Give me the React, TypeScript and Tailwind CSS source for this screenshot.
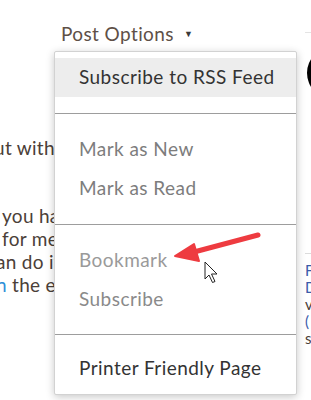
const paragraph = [
  { text: 'ut without', offset: '-ml-[6px]', gap: '' },
  { text: ' you have', offset: 'ml-[2px]', gap: 'mt-[45px]' },
  { text: 'for me', offset: 'ml-[2px]', gap: '' },
  { text: 'an do it', offset: '-ml-[4px]', gap: '' },
];

function MenuItem({ label, tone, active }: { label: string; tone: string; active?: boolean }) {
  return (
    <div className={`h-[39px] flex items-center pl-[24px] ${tone} ${active ? 'bg-[#ededed]' : ''}`}>
      {label}
    </div>
  );
}

function Separator({ last }: { last?: boolean }) {
  return <div className={`${last ? 'mt-[15px] mb-[14px]' : 'my-[16px]'} border-t border-[#9d9d9d]`} />;
}

export default function App() {
  return (
    <div className="relative w-[311px] h-[400px] overflow-hidden bg-white font-['Lato','Noto_Sans',sans-serif]">
      <div className="flex">
        {/* post column */}
        <div className="w-[305px] shrink-0">
          <div className="pt-[22px] pl-[61px] flex items-center gap-[10px] text-[19px] tracking-[0.4px] leading-[24px] text-[#5e5047]">
            Post Options
            <span className="text-[9px] text-[#3a3a3a]">▼</span>
          </div>
          <div className="mt-[90px] text-[19px] tracking-[0.3px] leading-[23px] text-[#4b4038] whitespace-nowrap">
            {paragraph.map((line) => (
              <div key={line.text} className={`${line.offset} ${line.gap}`}>
                {line.text}
              </div>
            ))}
            <div className="-ml-[4px]">
              <span className="text-[#2f8fd8]">n</span> the extra
            </div>
          </div>
        </div>

        {/* sidebar */}
        <div className="flex-1 pt-[32px]">
          <div className="border-t border-[#e4e4e4]" />
          <div className="mt-[14px] ml-[2px] w-[52px] h-[52px] rounded-full bg-black" />
          <div className="mt-[154px] border-t border-[#dcdcdc]" />
          <div className="mt-[8px] text-[15px] leading-[17px] whitespace-nowrap">
            <div className="text-[#3b5ba9]">F</div>
            <div className="text-[#3b5ba9]">D</div>
            <div className="text-[#4b4038]">v</div>
            <div className="text-[#3b5ba9]">(</div>
            <div className="text-[#4b4038]">s</div>
          </div>
        </div>
      </div>

      {/* dropdown menu */}
      <div className="absolute left-[54px] top-[51px] w-[243px] bg-white border border-[#d2d2d2] rounded-[2px] shadow-[0_2px_8px_rgba(0,0,0,0.22)] py-[6px] text-[19px] tracking-[0.45px]">
        <MenuItem label="Subscribe to RSS Feed" tone="text-[#333333]" active />
        <Separator />
        <MenuItem label="Mark as New" tone="text-[#7d7d7d]" />
        <MenuItem label="Mark as Read" tone="text-[#7d7d7d]" />
        <Separator />
        <MenuItem label="Bookmark" tone="text-[#9a9a9a]" />
        <MenuItem label="Subscribe" tone="text-[#8a8a8a]" />
        <Separator last />
        <MenuItem label="Printer Friendly Page" tone="text-[#333333]" />
      </div>

      {/* annotation arrow */}
      <svg className="absolute left-[170px] top-[228px]" width="96" height="36" viewBox="0 0 96 36">
        <line x1="88" y1="7" x2="24" y2="24" stroke="#ee3b40" strokeWidth="5" strokeLinecap="round" />
        <polygon points="5,28 24,16 29,33" fill="#ee3b40" stroke="#ee3b40" strokeWidth="2" strokeLinejoin="round" />
      </svg>

      {/* mouse cursor */}
      <svg className="absolute left-[204px] top-[261px]" width="16" height="24" viewBox="0 0 16 24">
        <path d="M1 1 L1 18 L5 14 L8.5 21.5 L11 20.5 L7.5 13 L13 13 Z" fill="white" stroke="#222" strokeWidth="1" strokeLinejoin="round" />
      </svg>
    </div>
  );
}
